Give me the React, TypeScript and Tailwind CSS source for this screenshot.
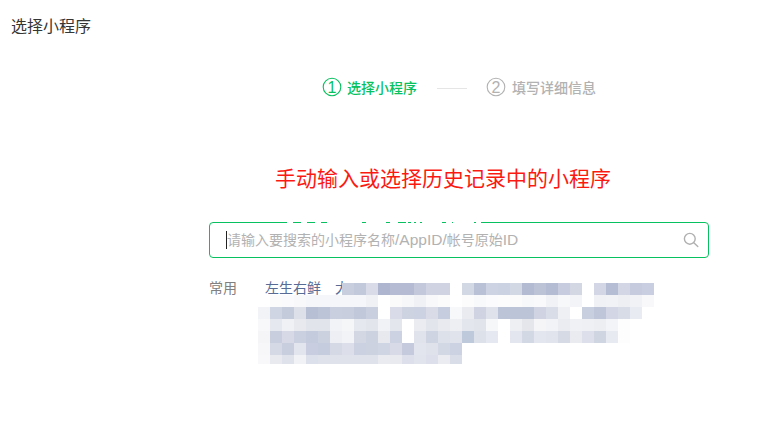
import React from 'react';

const FONT = 'font-["Liberation_Sans","Noto_Sans_CJK_SC",sans-serif]';

// mosaic over the blurred mini program names, 12px cells, '' = blank
const MOSAIC: string[][] = [
    ['', '', '', '', '', '', '', 'c8cede', 'c2c9db', 'd9dce8', 'aeb6cf', 'b4bbd2', 'b4bbd2', 'c3c9db', 'd0d4e2', 'd0d4e2', '', 'd3d8e5', 'b8c1d6', 'cdd3e2', 'cbd2e1', 'd3d8e5', 'b3bbd2', 'bcc3d7', 'b4bcd3', 'c7cddf', 'd3d6e3', '', 'd3d6e4', 'b5bdd4', 'd3d7e5', 'c6ccde', 'c9cfe0'],
    ['', 'fbfbfc', 'fafafc', 'f8f8fa', 'f5f6f9', 'f5f6f9', 'f5f6f9', 'f5f6f9', 'f5f6f9', 'f0f1f5', '', 'fafafa', 'f6f7f9', 'f0f1f5', 'f8f8fa', 'fbfbfc', '', 'fcfcfd', 'f8f9fb', 'fbfbfd', 'fcfcfd', 'fbfbfc', 'f7f8fa', 'f9f9fb', 'f1f2f6', 'f7f8fa', 'f3f4f7', '', 'f0f1f5', 'f1f2f5', 'eeeff3', 'f1f2f5', 'f8f8fa'],
    ['f2f3f7', 'd0d5e3', 'c4cbdb', 'dde0e9', 'b6bfd4', 'bcc4d7', 'cacfdf', 'c8cede', 'c1c8da', 'c9cfde', '', 'd9dce8', 'ced3e2', 'ccd2e1', 'd9dce7', 'c5cddf', 'f7f8fa', 'e9ebf1', 'd0d4e2', 'dfe2eb', 'bcc4d7', 'bcc4d7', 'bcc4d7', 'd0d4e2', 'd9dde8', 'eef0f4', '', 'c8cfdf', 'bfc6da', 'd3d7e5', 'd8dce7', 'e9ebf2'],
    ['f8f8fa', 'e6e8ef', 'f0f1f4', 'e7e9ef', 'e2e4ec', 'e2e4ec', 'f2f3f6', 'f5f6f8', 'e6e8ef', 'e3e5ec', 'f1f2f5', 'e4e6ee', '', 'eaecf1', 'e3e5ec', 'e9eaf0', 'eeeff3', 'e3e6ed', 'e2e4ec', 'f6f7f9', '', 'edeff3', 'e4e6ec', 'f5f5f8', 'f2f3f6', 'ebecf1', 'f0f1f5', 'eff0f4', 'eceef2', 'f3f4f7', 'fdfdfd'],
    ['f5f5f8', 'c8cede', 'd7dae6', 'cbd0e0', 'c4cbdc', 'ccd1e0', 'eeeff4', 'f2f3f6', 'd3d7e4', 'cdd2e1', 'e7e9ef', 'ccd2e1', '', 'e0e3ec', 'cfd4e2', 'dce1ea', 'e0e3eb', 'bfc9dc', 'dce1ea', 'e5e8f0', '', 'e3e6ef', 'd3d8e5', 'e3e6ef', 'e1e4ed', 'd5dae5', 'e9ebf0', 'dde0ea', 'd0d5e2', 'e8eaf1', 'fdfdfd'],
    ['f7f7fa', 'd5d9e5', 'c8cede', 'e2e5ed', 'c8cedf', 'c5ccdd', 'd5d9e6', 'dcdfe9', 'cbd1e0', 'cdd2e1', 'd0d5e3', 'd8dbe7', 'c5cbdd', 'e2e5ed', 'dfe2eb', 'd3d8e5', 'ccd2e1'],
    ['f8f8fa', 'e8eaf0', 'dfe2eb', 'f1f2f5', 'dce0ea', 'dfe2eb', 'dfe2eb', 'dfe2eb', 'dfe2eb', 'dfe2eb', 'e9ebf1', 'e8eaf0', 'dde0ea', 'e2e4ed', 'dde0ea', 'eaecf1', 'd9dde8'],
];

// bits of the box's top border that stick out from under the cover: [x, width]
const BORDER_BITS = [[6, 8], [20, 8], [34, 6], [75, 4], [99, 4], [111, 8], [121, 3], [127, 2], [133, 2], [155, 4], [165, 1], [187, 2]];

function StepCircle({ n, color }: { n: number; color: string }) {
    return (
        <svg width="20" height="20" viewBox="0 0 20 20" className="shrink-0">
            <circle cx="10" cy="10" r="8.8" fill="none" stroke={color} strokeWidth="1.1" />
            <text x="10" y="15.6" textAnchor="middle" fontSize="16" fontFamily="Liberation Sans, sans-serif" fill={color}>
                {n}
            </text>
        </svg>
    );
}

function Mosaic() {
    return (
        <svg width="396" height="81" viewBox="0 0 396 81" className="absolute left-[258px] top-[283px]" shapeRendering="crispEdges">
            {MOSAIC.map((row, y) =>
                row.map((c, x) => (c ? <rect key={`${x}-${y}`} x={x * 12} y={y * 12} width="12" height="12" fill={`#${c}`} /> : null))
            )}
        </svg>
    );
}

export default function App() {
    return (
        <div className={`relative h-[427px] w-[764px] overflow-hidden bg-white ${FONT}`}>
            <div className="pl-[11px] pt-[15px] text-[16px] leading-6 text-[#353535]">选择小程序</div>

            {/* steps */}
            <div className="mt-[38px] flex h-5 items-center pl-[322px]">
                <StepCircle n={1} color="#07c160" />
                <span className="ml-[5px] mt-[2px] text-[14px] font-medium text-[#07c160]">选择小程序</span>
                <span className="ml-[20px] mt-[2px] h-px w-[30px] bg-[#e5e5e5]" />
                <span className="ml-[19px]">
                    <StepCircle n={2} color="#b2b2b2" />
                </span>
                <span className="ml-[6px] mt-[2px] text-[14px] font-medium text-[#b2b2b2]">填写详细信息</span>
            </div>

            <h2 className="mt-[66px] pl-[275px] text-[21px] font-normal leading-8 text-[#fb1a12]">手动输入或选择历史记录中的小程序</h2>

            {/* search box */}
            <div className="relative ml-[209px] mt-[27px] flex h-9 w-[500px] items-center rounded border border-[#07c160] pl-4 pr-[9px]">
                <span className="h-[18px] w-px bg-[#222222]" />
                <span className="flex-1 text-[14px] text-[#b2b2b2]">
                    请输入要搜索的小程序名称<span className="text-[15.5px]">/AppID/</span>帐号原始<span className="text-[15.5px]">ID</span>
                </span>
                <svg width="16" height="16" viewBox="0 0 16 16" fill="none" stroke="#b0b0b0" strokeWidth="1.4" strokeLinecap="round">
                    <circle cx="6.8" cy="6.8" r="5.4" />
                    <path d="M10.8 10.8l4 3.8" />
                </svg>
                {/* white cover over the top border, only a few bits show */}
                <svg width="194" height="1" viewBox="0 0 194 1" className="absolute -top-px left-[77px]" shapeRendering="crispEdges">
                    <rect width="194" height="1" fill="#ffffff" />
                    {BORDER_BITS.map(([x, w]) => (
                        <rect key={x} x={x} width={w} height="1" fill="#07c160" />
                    ))}
                </svg>
            </div>

            {/* recent */}
            <div className="mt-[20px] flex pl-[209px] text-[14px] leading-5">
                <span className="w-14 text-[#808080]">常用</span>
                <span className="text-[#576b95]">左生右鲜</span>
                <span className="ml-[14px] text-[#576b95]">大</span>
            </div>
            <Mosaic />
        </div>
    );
}
